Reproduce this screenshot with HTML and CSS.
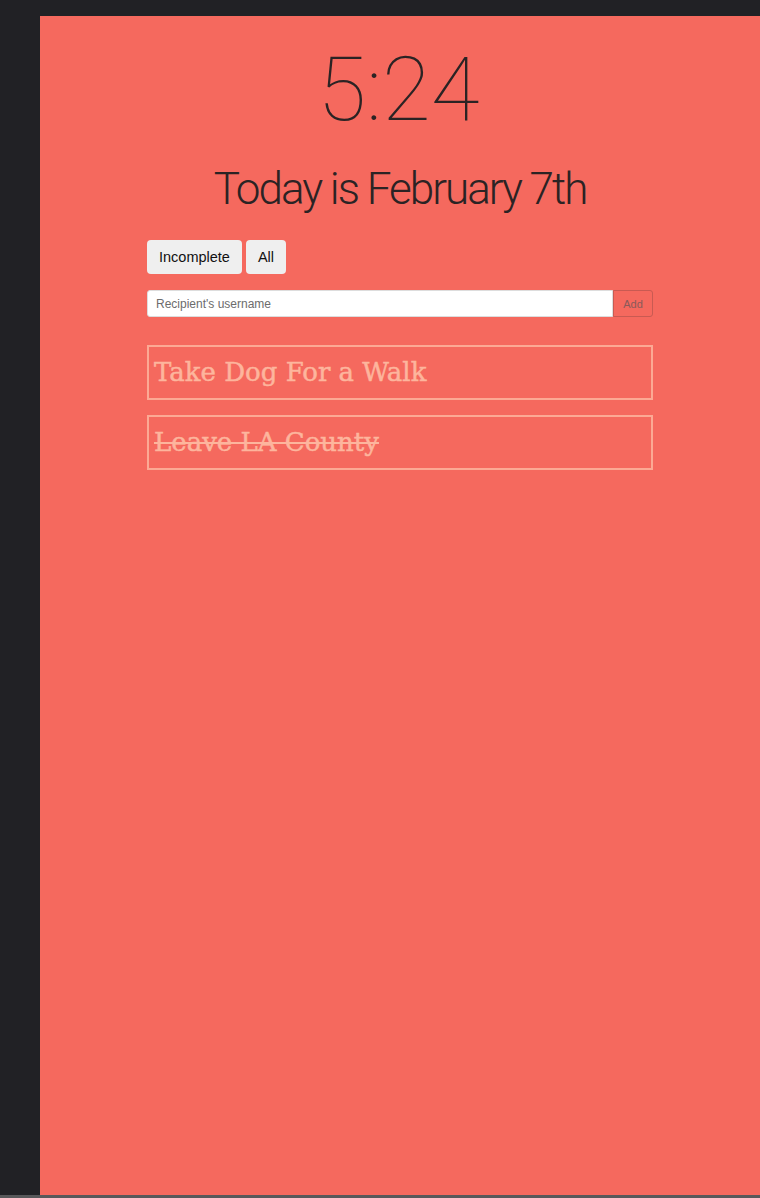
FILE: index.html
```html
<!DOCTYPE html>
<html>
<head>
<meta charset="utf-8">
<link rel="stylesheet" href="styles.css">
</head>
<body>
<div class="panel">
  <div class="clock">5:24</div>
  <div class="date">Today is February 7th</div>
  <div class="container">
    <div class="filters">
      <button class="btn">Incomplete</button>
      <button class="btn">All</button>
    </div>
    <div class="input-group">
      <input class="field" type="text" placeholder="Recipient's username">
      <button class="add">Add</button>
    </div>
    <ul class="todos">
      <li class="todo">Take Dog For a Walk</li>
      <li class="todo done">Leave LA County</li>
    </ul>
  </div>
</div>
<div class="bottom-line"></div>
</body>
</html>
```
FILE: styles.css
```css
html, body {
  margin: 0;
  padding: 0;
  background: #212125;
}
body {
  padding-top: 16px;
}
.panel {
  margin-left: 40px;
  height: 1179px;
  background: #f5695e;
  color: #2b2324;
  font-family: Roboto, "Liberation Sans", sans-serif;
  overflow: hidden;
}
.bottom-line {
  height: 3px;
  background: #58585a;
}
.clock {
  text-align: center;
  font-size: 89px;
  font-weight: 100;
  line-height: 1;
  margin-top: 29px;
  padding-right: 3px;
}
.date {
  text-align: center;
  font-size: 44px;
  font-weight: 300;
  line-height: 1;
  margin-top: 33px;
  letter-spacing: -2px;
}
.container {
  width: 506px;
  margin: 29px auto 0;
}
.filters {
  display: flex;
  gap: 4px;
}
.btn {
  background: #efefef;
  border: none;
  border-radius: 4px;
  font-family: "Liberation Sans", Arial, sans-serif;
  font-size: 14.5px;
  color: #111;
  height: 34px;
  padding: 0 12px;
  margin: 0;
}
.input-group {
  display: flex;
  margin-top: 16px;
  height: 27px;
}
.field {
  flex: 1;
  margin: 0;
  border: 1px solid #ddd;
  border-radius: 3px 0 0 3px;
  background: #fff;
  padding: 0 8px;
  font-family: "Liberation Sans", Arial, sans-serif;
  font-size: 12px;
  height: 27px;
  box-sizing: border-box;
}
.field::placeholder {
  color: #6c6c6c;
}
.add {
  width: 40px;
  margin: 0;
  padding: 0;
  background: transparent;
  border: 1px solid #c95a52;
  border-radius: 0 3px 3px 0;
  color: #8a5a5a;
  font-family: "Liberation Sans", Arial, sans-serif;
  font-size: 11px;
  height: 27px;
}
.todos {
  list-style: none;
  margin: 28px 0 0;
  padding: 0;
}
.todo {
  box-sizing: border-box;
  height: 55px;
  border: 2px solid #fca994;
  color: #fdb59d;
  font-family: "DejaVu Serif", "Liberation Serif", serif;
  font-size: 26px;
  line-height: 51px;
  padding-left: 5px;
  margin-bottom: 15px;
  -webkit-text-stroke: 0.5px #fdb59d;
}
.done {
  text-decoration: line-through;
}
```
